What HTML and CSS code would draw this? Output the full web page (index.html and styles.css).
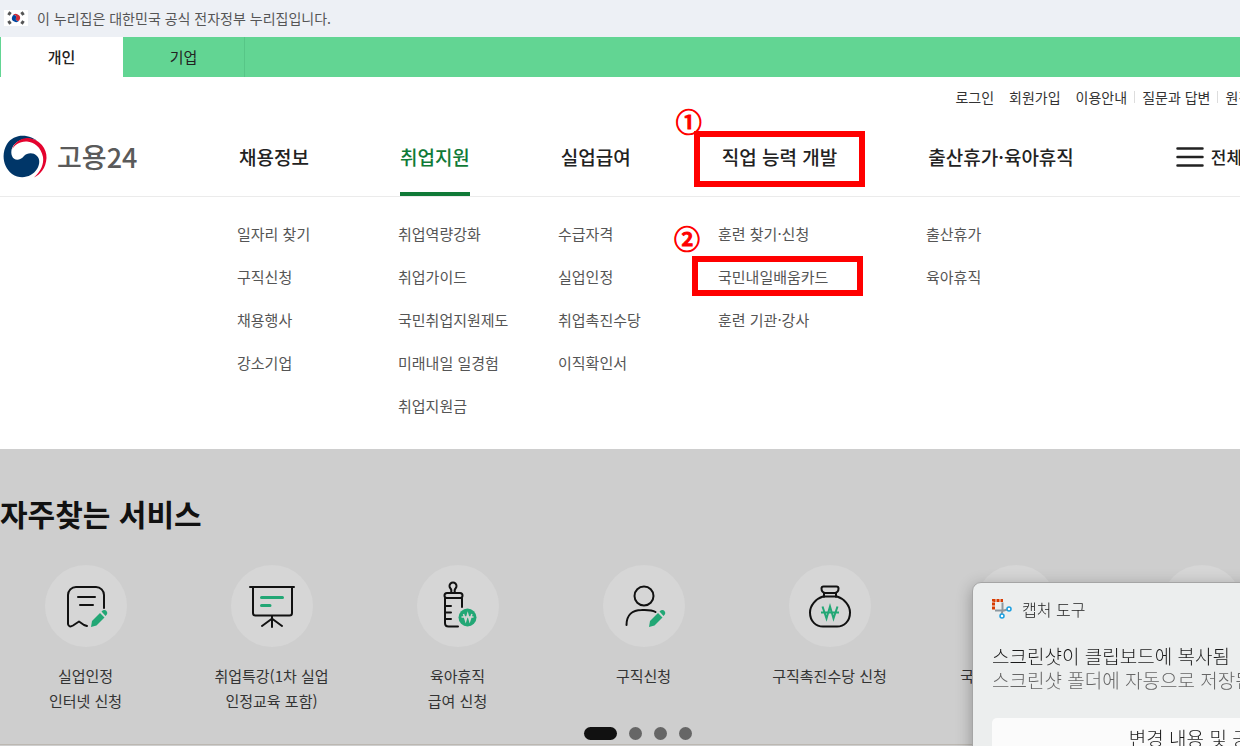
FILE: index.html
```html
<!DOCTYPE html>
<html lang="ko">
<head>
    <meta charset="UTF-8">
    <meta name="viewport" content="width=device-width, initial-scale=1.0">
    <title>고용24</title>
    <link rel="stylesheet" href="styles.css">
</head>
<body>
    <!-- Government banner -->
    <div class="gov-banner">
        <svg class="flag" viewBox="0 0 24 16">
            <rect width="24" height="16" fill="#fff"/>
            <path d="M8.4 6.2a4 4 0 0 1 7.2 3.6 2 2 0 0 1-3.6-1.8 2 2 0 0 0-3.6-1.8z" fill="#cd2e3a"/>
            <path d="M8.4 6.2a2 2 0 0 1 3.6 1.8 2 2 0 0 0 3.6 1.8 4 4 0 0 1-7.2-3.6z" fill="#0047a0"/>
            <path d="M4.500 5l2-2.800M17.500 2.200l2 2.800M4.500 11l2 2.800M17.500 13.800l2-2.800" stroke="#555" stroke-width="3"/>
        </svg>
        <p>이 누리집은 대한민국 공식 전자정부 누리집입니다.</p>
    </div>

    <!-- Member type tabs -->
    <div class="type-tabs">
        <a href="#" class="active">개인</a>
        <a href="#">기업</a>
    </div>

    <header class="header">
        <ul class="util-menu">
            <li><a href="#">로그인</a></li>
            <li><a href="#">회원가입</a></li>
            <li><a href="#">이용안내</a></li>
            <li class="divided"><a href="#">질문과 답변</a></li>
            <li class="divided"><a href="#">원격지원</a></li>
        </ul>

        <div class="gnb">
            <a href="#" class="logo">
                <svg viewBox="0 0 44 44">
                    <path d="M36 7.500C27-1.500 11-2 4 9-2 19 0 32 9 39c9 6 20 3 25-5 3-5 3-10 0-13-4-4-10-3-13 0-4 5-10 5-12 0C6 13 13 5 22 4c8-1 13 2 14 3.500z" fill="#003668"/>
                    <path d="M9 15C11 7 18 3 25 3c12 1 19 11 18.500 20C43 33 37 40 31 42.500 38 36 41 29 40 22 38 12 31 7 24 6.500 17 6 11 10 9 15z" fill="#e4032e"/>
                </svg>
                <span>고용24</span>
            </a>
            <ul class="main-menu">
                <li><a href="#">채용정보</a></li>
                <li><a href="#" class="active">취업지원</a></li>
                <li><a href="#">실업급여</a></li>
                <li class="marked">
                    <a href="#">직업 능력 개발</a>
                    <span class="mark mark-title"></span>
                    <span class="mark-num">①</span>
                </li>
                <li><a href="#">출산휴가·육아휴직</a></li>
            </ul>
            <button type="button" class="all-menu">
                <svg viewBox="0 0 28 20">
                    <path d="M1.500 1.500h25M1.500 10h25M1.500 18.500h25"/>
                </svg>
                전체메뉴
            </button>
        </div>
    </header>

    <!-- Opened sub menu -->
    <nav class="sub-menu">
        <ul>
            <li><a href="#">일자리 찾기</a></li>
            <li><a href="#">구직신청</a></li>
            <li><a href="#">채용행사</a></li>
            <li><a href="#">강소기업</a></li>
        </ul>
        <ul>
            <li><a href="#">취업역량강화</a></li>
            <li><a href="#">취업가이드</a></li>
            <li><a href="#">국민취업지원제도</a></li>
            <li><a href="#">미래내일 일경험</a></li>
            <li><a href="#">취업지원금</a></li>
        </ul>
        <ul>
            <li><a href="#">수급자격</a></li>
            <li><a href="#">실업인정</a></li>
            <li><a href="#">취업촉진수당</a></li>
            <li><a href="#">이직확인서</a></li>
        </ul>
        <ul>
            <li><a href="#">훈련 찾기·신청</a></li>
            <li class="marked">
                <a href="#">국민내일배움카드</a>
                <span class="mark mark-item"></span>
                <span class="mark-num">②</span>
            </li>
            <li><a href="#">훈련 기관·강사</a></li>
        </ul>
        <ul>
            <li><a href="#">출산휴가</a></li>
            <li><a href="#">육아휴직</a></li>
        </ul>
    </nav>

    <!-- Frequently used services -->
    <main class="services">
        <h2>자주찾는 서비스</h2>
        <div class="service-list">
            <a href="#" class="service">
                <span class="circle">
                    <svg viewBox="0 0 82 82">
                        <path class="line" d="M59 43V30a8 8 0 0 0-8-8H31a8 8 0 0 0-8 8v29q1 4 5 1.500l6-4 5 3.500 3 1M33 32h17M35 40h13"/>
                        <path class="green" d="M46 62l1-6 8-8 4.500 4.500-8 8zM56.500 46.500l1.500-1.200q2-1 3.500.7 1.600 2 .3 3.500L60.500 51z"/>
                    </svg>
                </span>
                실업인정<br>인터넷 신청
            </a>
            <a href="#" class="service">
                <span class="circle">
                    <svg viewBox="0 0 82 82">
                        <path class="line" d="M19 22h44M22 22v26q0 2.500 2.500 2.500h34q2.500 0 2.500-2.500V22M41 51v11M40.500 54L31 61M41.500 54l9.500 7"/>
                        <path class="green-line" d="M30.500 32.500h21M30.500 40.500h8.500"/>
                    </svg>
                </span>
                취업특강(1차 실업<br>인정교육 포함)
            </a>
            <a href="#" class="service">
                <span class="circle">
                    <svg viewBox="0 0 82 82">
                        <path class="line" d="M34 28q1-3-0.500-4.500a3.500 3.500 0 1 1 5 0Q37 25 38 28M30 28h13q2.500 0 2.500 2.500T43 33H30q-2.500 0-2.500-2.500T30 28zM28 33.500V58q0 3.500 3.500 3.500H41M45 33.500V42M28 41h6M28 47.500h6M28 54h6"/>
                        <circle class="green" cx="50.500" cy="52.500" r="9"/>
                        <path d="M46.500 49l2.200 7 2-7 2 7 2.200-7M44.500 52h12" fill="none" stroke="#d4d4d4" stroke-width="1.500"/>
                    </svg>
                </span>
                육아휴직<br>급여 신청
            </a>
            <a href="#" class="service">
                <span class="circle">
                    <svg viewBox="0 0 82 82">
                        <circle class="line" cx="41" cy="31" r="9.500"/>
                        <path class="line" d="M23.500 60c0-10 6-15 15-15q10-.5 14 2"/>
                        <path class="green" d="M46 62l1-6 8-8 4.500 4.500-8 8zM56.500 46.500l1.500-1.200q2-1 3.500.7 1.600 2 .3 3.500L60.500 51z"/>
                    </svg>
                </span>
                구직신청
            </a>
            <a href="#" class="service">
                <span class="circle">
                    <svg viewBox="0 0 82 82">
                        <path class="line" d="M34.500 21.500h13q2 0 2 2 0 4-4 4.500h-9q-4-.5-4-4.500 0-2 2-2zM35 28v4M47 28v4M34 31.500h14c7 2 13 9 13 16 0 9-6 14-13 14H34c-7 0-13-5-13-14 0-7 6-14 13-16z"/>
                        <path d="M33.500 41.500l4 12 3.500-12 3.500 12 4-12M32 47.500h18" fill="none" stroke="#22a775" stroke-width="2"/>
                    </svg>
                </span>
                구직촉진수당 신청
            </a>
            <a href="#" class="service"><span class="circle"></span>국민취업지원제도</a>
            <a href="#" class="service"><span class="circle"></span></a>
        </div>
        <div class="pager">
            <button type="button" class="active" aria-label="1"></button>
            <button type="button" aria-label="2"></button>
            <button type="button" aria-label="3"></button>
            <button type="button" aria-label="4"></button>
        </div>
    </main>

    <!-- Capture tool notification -->
    <aside class="toast">
        <div class="toast-app">
            <svg viewBox="0 0 20 20">
                <path d="M10.500 3.500v8.500l-1 3M3 11.500h9l3-1" fill="none" stroke="#8d979e" stroke-width="2"/>
                <path d="M1.500 10.500V1.500H11" fill="none" stroke="#d83b01" stroke-width="3" stroke-dasharray="3 1"/>
                <circle cx="17" cy="10" r="2" fill="#fff" stroke="#1a9fe0" stroke-width="1.500"/>
                <circle cx="10" cy="17" r="2" fill="#fff" stroke="#1a9fe0" stroke-width="1.500"/>
            </svg>
            <span>캡처 도구</span>
        </div>
        <p class="toast-title">스크린샷이 클립보드에 복사됨</p>
        <p class="toast-text">스크린샷 폴더에 자동으로 저장됨</p>
        <button type="button">변경 내용 및 공유</button>
    </aside>
</body>
</html>
```

FILE: styles.css
```css
* {
    margin: 0;
    padding: 0;
    box-sizing: border-box;
}

body {
    min-height: 100vh;
    display: flex;
    flex-direction: column;
    background: #fff;
    color: #222;
    font-family: "Noto Sans CJK KR", sans-serif;
    font-size: 15px;
    overflow: hidden;
}

a {
    color: inherit;
    text-decoration: none;
}

ul {
    list-style: none;
}

button {
    border: 0;
    background: none;
    font: inherit;
    color: inherit;
    cursor: pointer;
    white-space: nowrap;
}

/* Government banner */
.gov-banner {
    display: flex;
    align-items: center;
    gap: 9px;
    height: 37px;
    padding: 0 0 2px 4px;
    background: #edf0f5;
    color: #555;
    font-size: 14px;
}

.flag {
    width: 24px;
    height: 16px;
}

/* Member type tabs */
.type-tabs {
    display: flex;
    height: 40px;
    padding-left: 1px;
    background: #62d593;
}

.type-tabs a {
    width: 122px;
    line-height: 40px;
    text-align: center;
    border-right: 1px solid #57c687;
}

.type-tabs .active {
    background: #fff;
    border-color: #fff;
    font-weight: 500;
}

/* Header */
.header {
    border-bottom: 1px solid #ebebeb;
}

.util-menu {
    display: flex;
    justify-content: flex-end;
    gap: 15px;
    margin-right: -37px;
    padding-top: 10px;
    font-size: 14px;
    line-height: 20px;
    color: #333;
    white-space: nowrap;
}

.util-menu .divided {
    position: relative;
}

.util-menu .divided::before {
    content: "";
    position: absolute;
    left: -8px;
    top: 4px;
    height: 12px;
    border-left: 1px solid #ddd;
}

.gnb {
    display: flex;
    height: 89px;
    line-height: 80px;
    padding-top: 10px;
}

.logo {
    display: flex;
    align-items: center;
    flex: 0 0 239px;
    gap: 10px;
    height: 80px;
    padding-left: 3px;
    color: #5a5a5a;
    font-size: 27px;
    font-weight: 500;
}

.logo svg {
    width: 44px;
    height: 44px;
}

.main-menu {
    display: flex;
    gap: 91px;
    font-size: 19px;
    font-weight: 500;
    white-space: nowrap;
}

.main-menu li {
    display: flex;
}

.main-menu .active {
    color: #107a37;
    border-bottom: 4px solid #107a37;
}

.all-menu {
    display: flex;
    align-items: center;
    gap: 7px;
    height: 80px;
    margin-left: 102px;
    font-size: 17px;
    font-weight: 500;
}

.all-menu svg {
    width: 28px;
    height: 20px;
    stroke: #222;
    stroke-width: 2.500;
    stroke-linecap: round;
}

/* Sub menu */
.sub-menu {
    display: grid;
    grid-template-columns: 161px 160px 160px 208px 1fr;
    padding: 15px 0 22px 237px;
    color: #555;
    white-space: nowrap;
}

.sub-menu li {
    line-height: 43px;
}

/* Step marks */
.marked {
    position: relative;
}

.mark {
    position: absolute;
    left: -28px;
    width: 171px;
    border: 6px solid #f00;
}

.mark-title {
    top: 14px;
    height: 56px;
}

.mark-item {
    top: 1px;
    left: -26px;
    height: 40px;
}

.mark-num {
    position: absolute;
    left: -46px;
    top: -10px;
    color: #f00;
    font-size: 26px;
    font-weight: 500;
    line-height: 28px;
    -webkit-text-stroke: 1px #f00;
}

.sub-menu .mark-num {
    top: -31px;
    left: -44px;
}

/* Services */
.services {
    flex: 1;
    padding-top: 42px;
    background: #cecece;
    color: #333;
}

.services h2 {
    color: #111;
    font-size: 30px;
    line-height: 44px;
}

.service-list {
    display: flex;
    gap: 15px;
    padding-top: 30px;
}

.service {
    flex: 0 0 171px;
    line-height: 25px;
    text-align: center;
}

.circle {
    display: block;
    width: 82px;
    height: 82px;
    margin: 0 auto 16px;
    border-radius: 50%;
    background: #d6d6d6;
}

.line {
    fill: none;
    stroke: #111;
    stroke-width: 2;
    stroke-linecap: round;
    stroke-linejoin: round;
}

.green {
    fill: #22a775;
}

.green-line {
    stroke: #22a775;
    stroke-width: 3;
    stroke-linecap: round;
}

.pager {
    display: flex;
    justify-content: center;
    gap: 12px;
    padding: 14px 0 4px 36px;
    border-bottom: 1px solid #bcb8b2;
}

.pager button {
    width: 13px;
    height: 13px;
    border-radius: 7px;
    background: #666;
}

.pager .active {
    width: 33px;
    background: #111;
}

/* Capture tool notification */
.toast {
    position: fixed;
    right: -184px;
    bottom: -17px;
    width: 452px;
    height: 181px;
    padding: 14px 19px;
    border: 1px solid #a5a5a5;
    border-radius: 9px;
    background: #eceeee;
    box-shadow: 0 4px 16px rgba(0, 0, 0, 0.3);
    color: #1a1a1a;
    font-size: 19px;
    font-weight: 300;
    line-height: 24px;
}

.toast-app {
    display: flex;
    align-items: center;
    gap: 10px;
    margin-bottom: 23px;
    font-size: 16px;
}

.toast-app svg {
    width: 20px;
    height: 20px;
}

.toast-text {
    color: #666;
}

.toast button {
    width: 100%;
    height: 40px;
    margin-top: 26px;
    border-radius: 5px;
    background: #fbfbfb;
}
```
